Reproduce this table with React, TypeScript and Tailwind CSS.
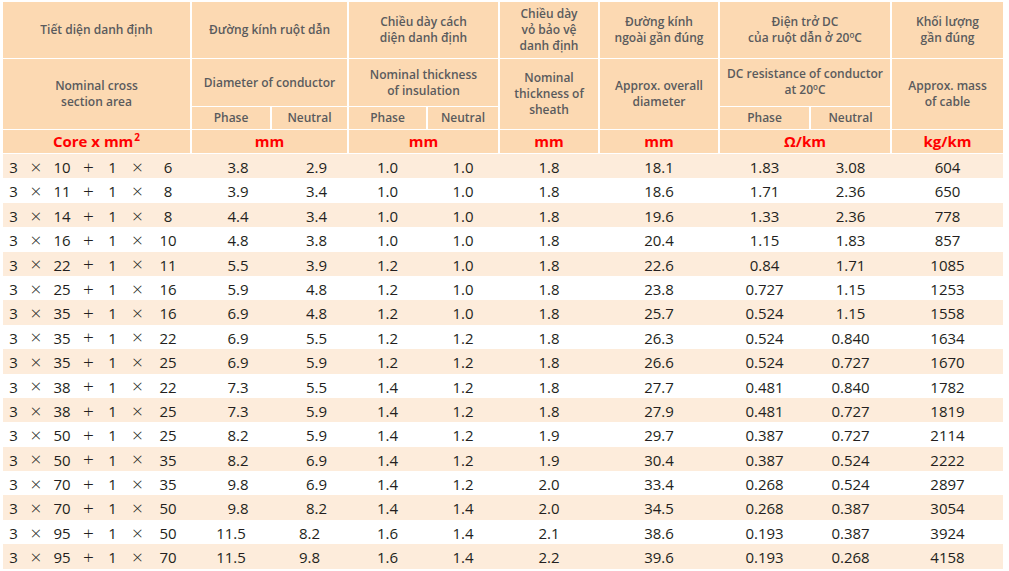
import React from 'react';

const COLS = 'grid grid-cols-[187px_78px_75px_77px_70px_98px_118px_89px_79px_111px] gap-x-[2px]';

type Row = [number, number, string, string, string, string, string, string, string, string, string];

const rows: Row[] = [
  [10, 6, '3.8', '2.9', '1.0', '1.0', '1.8', '18.1', '1.83', '3.08', '604'],
  [11, 8, '3.9', '3.4', '1.0', '1.0', '1.8', '18.6', '1.71', '2.36', '650'],
  [14, 8, '4.4', '3.4', '1.0', '1.0', '1.8', '19.6', '1.33', '2.36', '778'],
  [16, 10, '4.8', '3.8', '1.0', '1.0', '1.8', '20.4', '1.15', '1.83', '857'],
  [22, 11, '5.5', '3.9', '1.2', '1.0', '1.8', '22.6', '0.84', '1.71', '1085'],
  [25, 16, '5.9', '4.8', '1.2', '1.0', '1.8', '23.8', '0.727', '1.15', '1253'],
  [35, 16, '6.9', '4.8', '1.2', '1.0', '1.8', '25.7', '0.524', '1.15', '1558'],
  [35, 22, '6.9', '5.5', '1.2', '1.2', '1.8', '26.3', '0.524', '0.840', '1634'],
  [35, 25, '6.9', '5.9', '1.2', '1.2', '1.8', '26.6', '0.524', '0.727', '1670'],
  [38, 22, '7.3', '5.5', '1.4', '1.2', '1.8', '27.7', '0.481', '0.840', '1782'],
  [38, 25, '7.3', '5.9', '1.4', '1.2', '1.8', '27.9', '0.481', '0.727', '1819'],
  [50, 25, '8.2', '5.9', '1.4', '1.2', '1.9', '29.7', '0.387', '0.727', '2114'],
  [50, 35, '8.2', '6.9', '1.4', '1.2', '1.9', '30.4', '0.387', '0.524', '2222'],
  [70, 35, '9.8', '6.9', '1.4', '1.2', '2.0', '33.4', '0.268', '0.524', '2897'],
  [70, 50, '9.8', '8.2', '1.4', '1.4', '2.0', '34.5', '0.268', '0.387', '3054'],
  [95, 50, '11.5', '8.2', '1.6', '1.4', '2.1', '38.6', '0.193', '0.387', '3924'],
  [95, 70, '11.5', '9.8', '1.6', '1.4', '2.2', '39.6', '0.193', '0.268', '4158'],
];

function Head({ className = '', children }: { className?: string; children: React.ReactNode }) {
  return (
    <div className={`bg-[#fcd9b2] flex items-center justify-center text-center text-[12px] leading-[16px] font-semibold text-[#5a5b5d] ${className}`}>
      <div>{children}</div>
    </div>
  );
}

function Unit({ className = '', children }: { className?: string; children: React.ReactNode }) {
  return (
    <div className={`bg-[#fcd9b2] flex items-center justify-center text-[15px] font-bold text-[#ff0000] ${className}`}>
      {children}
    </div>
  );
}

const Deg = () => <span className="text-[8px] relative -top-[4px]">o</span>;

function Core({ a, b }: { a: number; b: number }) {
  return (
    <div className="grid grid-cols-[21px_24px_28px_25px_23px_27px_34px] items-center text-center">
      <span>3</span>
      <span className="text-[19px] leading-none font-light">×</span>
      <span>{a}</span>
      <span className="text-[19px] leading-none font-light">+</span>
      <span>1</span>
      <span className="text-[19px] leading-none font-light">×</span>
      <span>{b}</span>
    </div>
  );
}

export default function App() {
  return (
    <div className="min-h-screen bg-white pl-[3px] pt-[2px] font-['Open_Sans',sans-serif]">
      <div className={`${COLS} grid-rows-[56px_47px_22px_23px] gap-y-px w-[1000px]`}>
        <Head className="col-start-1 row-start-1">Tiết diện danh định</Head>
        <Head className="col-start-1 row-start-2 row-span-2">Nominal cross<br />section area</Head>
        <Unit className="col-start-1 row-start-4">
          Core x mm<span className="text-[10px] relative -top-[4px] ml-px">2</span>
        </Unit>

        <Head className="col-start-2 col-span-2 row-start-1">Đường kính ruột dẫn</Head>
        <Head className="col-start-2 col-span-2 row-start-2">Diameter of conductor</Head>
        <Head className="col-start-2 row-start-3">Phase</Head>
        <Head className="col-start-3 row-start-3">Neutral</Head>
        <Unit className="col-start-2 col-span-2 row-start-4">mm</Unit>

        <Head className="col-start-4 col-span-2 row-start-1">Chiều dày cách<br />diện danh định</Head>
        <Head className="col-start-4 col-span-2 row-start-2">Nominal thickness<br />of insulation</Head>
        <Head className="col-start-4 row-start-3">Phase</Head>
        <Head className="col-start-5 row-start-3">Neutral</Head>
        <Unit className="col-start-4 col-span-2 row-start-4">mm</Unit>

        <Head className="col-start-6 row-start-1">Chiều dày<br />vỏ bảo vệ<br />danh định</Head>
        <Head className="col-start-6 row-start-2 row-span-2">Nominal<br />thickness of<br />sheath</Head>
        <Unit className="col-start-6 row-start-4">mm</Unit>

        <Head className="col-start-7 row-start-1">Đường kính<br />ngoài gần đúng</Head>
        <Head className="col-start-7 row-start-2 row-span-2">Approx. overall<br />diameter</Head>
        <Unit className="col-start-7 row-start-4">mm</Unit>

        <Head className="col-start-8 col-span-2 row-start-1">
          Điện trở DC<br />của ruột dẫn ở 20<Deg />C
        </Head>
        <Head className="col-start-8 col-span-2 row-start-2">
          DC resistance of conductor<br />at 20<Deg />C
        </Head>
        <Head className="col-start-8 row-start-3">Phase</Head>
        <Head className="col-start-9 row-start-3">Neutral</Head>
        <Unit className="col-start-8 col-span-2 row-start-4">Ω/km</Unit>

        <Head className="col-start-10 row-start-1">Khối lượng<br />gần đúng</Head>
        <Head className="col-start-10 row-start-2 row-span-2">Approx. mass<br />of cable</Head>
        <Unit className="col-start-10 row-start-4">kg/km</Unit>
      </div>

      <div className="mt-px w-[1000px] text-[15px] text-[#231f20]">
        {rows.map((r, i) => {
          const shift = i < 15;
          return (
            <div
              key={i}
              className={`${COLS} h-[24.4px] items-center pt-[2px] ${i % 2 === 0 ? 'bg-[#fdecdb]' : 'bg-white'}`}
            >
              <Core a={r[0]} b={r[1]} />
              <div className={`text-center ${shift ? 'pl-[14px]' : ''}`}>{r[2]}</div>
              <div className={`text-center ${shift ? 'pl-[14px]' : ''}`}>{r[3]}</div>
              <div className="text-center">{r[4]}</div>
              <div className="text-center">{r[5]}</div>
              <div className="text-center">{r[6]}</div>
              <div className="text-center">{r[7]}</div>
              <div className="text-center">{r[8]}</div>
              <div className="text-center">{r[9]}</div>
              <div className="text-center">{r[10]}</div>
            </div>
          );
        })}
      </div>
    </div>
  );
}
